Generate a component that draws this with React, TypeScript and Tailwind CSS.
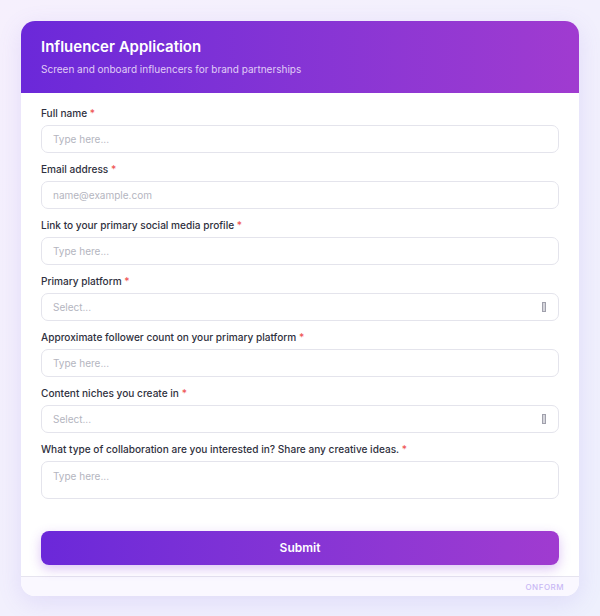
const fields: { label: string; placeholder: string; kind: "input" | "select" | "textarea" }[] = [
  { label: "Full name", placeholder: "Type here...", kind: "input" },
  { label: "Email address", placeholder: "name@example.com", kind: "input" },
  { label: "Link to your primary social media profile", placeholder: "Type here...", kind: "input" },
  { label: "Primary platform", placeholder: "Select...", kind: "select" },
  { label: "Approximate follower count on your primary platform", placeholder: "Type here...", kind: "input" },
  { label: "Content niches you create in", placeholder: "Select...", kind: "select" },
  {
    label: "What type of collaboration are you interested in? Share any creative ideas.",
    placeholder: "Type here...",
    kind: "textarea",
  },
];

function Field({ label, placeholder, kind }: (typeof fields)[number]) {
  return (
    <div className="flex flex-col gap-[5px]">
      <div className="text-[10.1px] leading-[14px] font-medium text-[#2f3140]">
        {label} <span className="text-[#ef5a5a]">*</span>
      </div>
      <div
        className={`flex ${kind === "textarea" ? "h-[38px] items-start pt-[7px]" : "h-[28px] items-center"} justify-between rounded-[7px] border-[1.5px] border-[#e4e4ec] bg-white px-[11px]`}
      >
        <span className="text-[10px] text-[#b4b5c0]">{placeholder}</span>
        {kind === "select" && <span className="mr-[1px] h-[10px] w-[4px] border border-[#a0a0ac] bg-[#d6d6dc]" />}
      </div>
    </div>
  );
}

export default function App() {
  return (
    <div
      className="min-h-[616px] bg-gradient-to-br from-[#f6f0fd] to-[#eef0fd] px-[21px] pt-[21px] pb-[20px]"
      style={{ fontFamily: "Inter, 'Noto Sans', sans-serif" }}
    >
      <div className="overflow-hidden rounded-[14px] bg-white shadow-[0_6px_24px_rgba(120,90,220,0.14)]">
        <div className="h-[72px] bg-gradient-to-r from-[#6b28d9] to-[#a03bd0] px-[20px] pt-[16px]">
          <h1 className="text-[15px] leading-[20px] font-semibold text-white">Influencer Application</h1>
          <p className="mt-[6px] text-[10px] leading-[12px] text-[#e0cdf6]">
            Screen and onboard influencers for brand partnerships
          </p>
        </div>
        <div className="flex flex-col gap-[9px] px-[20px] pt-[13px]">
          {fields.map((f) => (
            <Field key={f.label} {...f} />
          ))}
        </div>
        <div className="px-[20px] pt-[32px] pb-[11px]">
          <button className="h-[34px] w-full rounded-[8px] bg-gradient-to-r from-[#6b28d9] to-[#a03bd0] text-[12px] font-semibold text-white shadow-[0_4px_12px_rgba(140,60,220,0.3)]">
            Submit
          </button>
        </div>
        <div className="flex h-[20px] items-center justify-end border-t border-[#e6e4ef] bg-[#faf8ff] px-[15px]">
          <span className="text-[8px] font-medium tracking-[0.5px] text-[#c9b8f5]">ONFORM</span>
        </div>
      </div>
    </div>
  );
}
